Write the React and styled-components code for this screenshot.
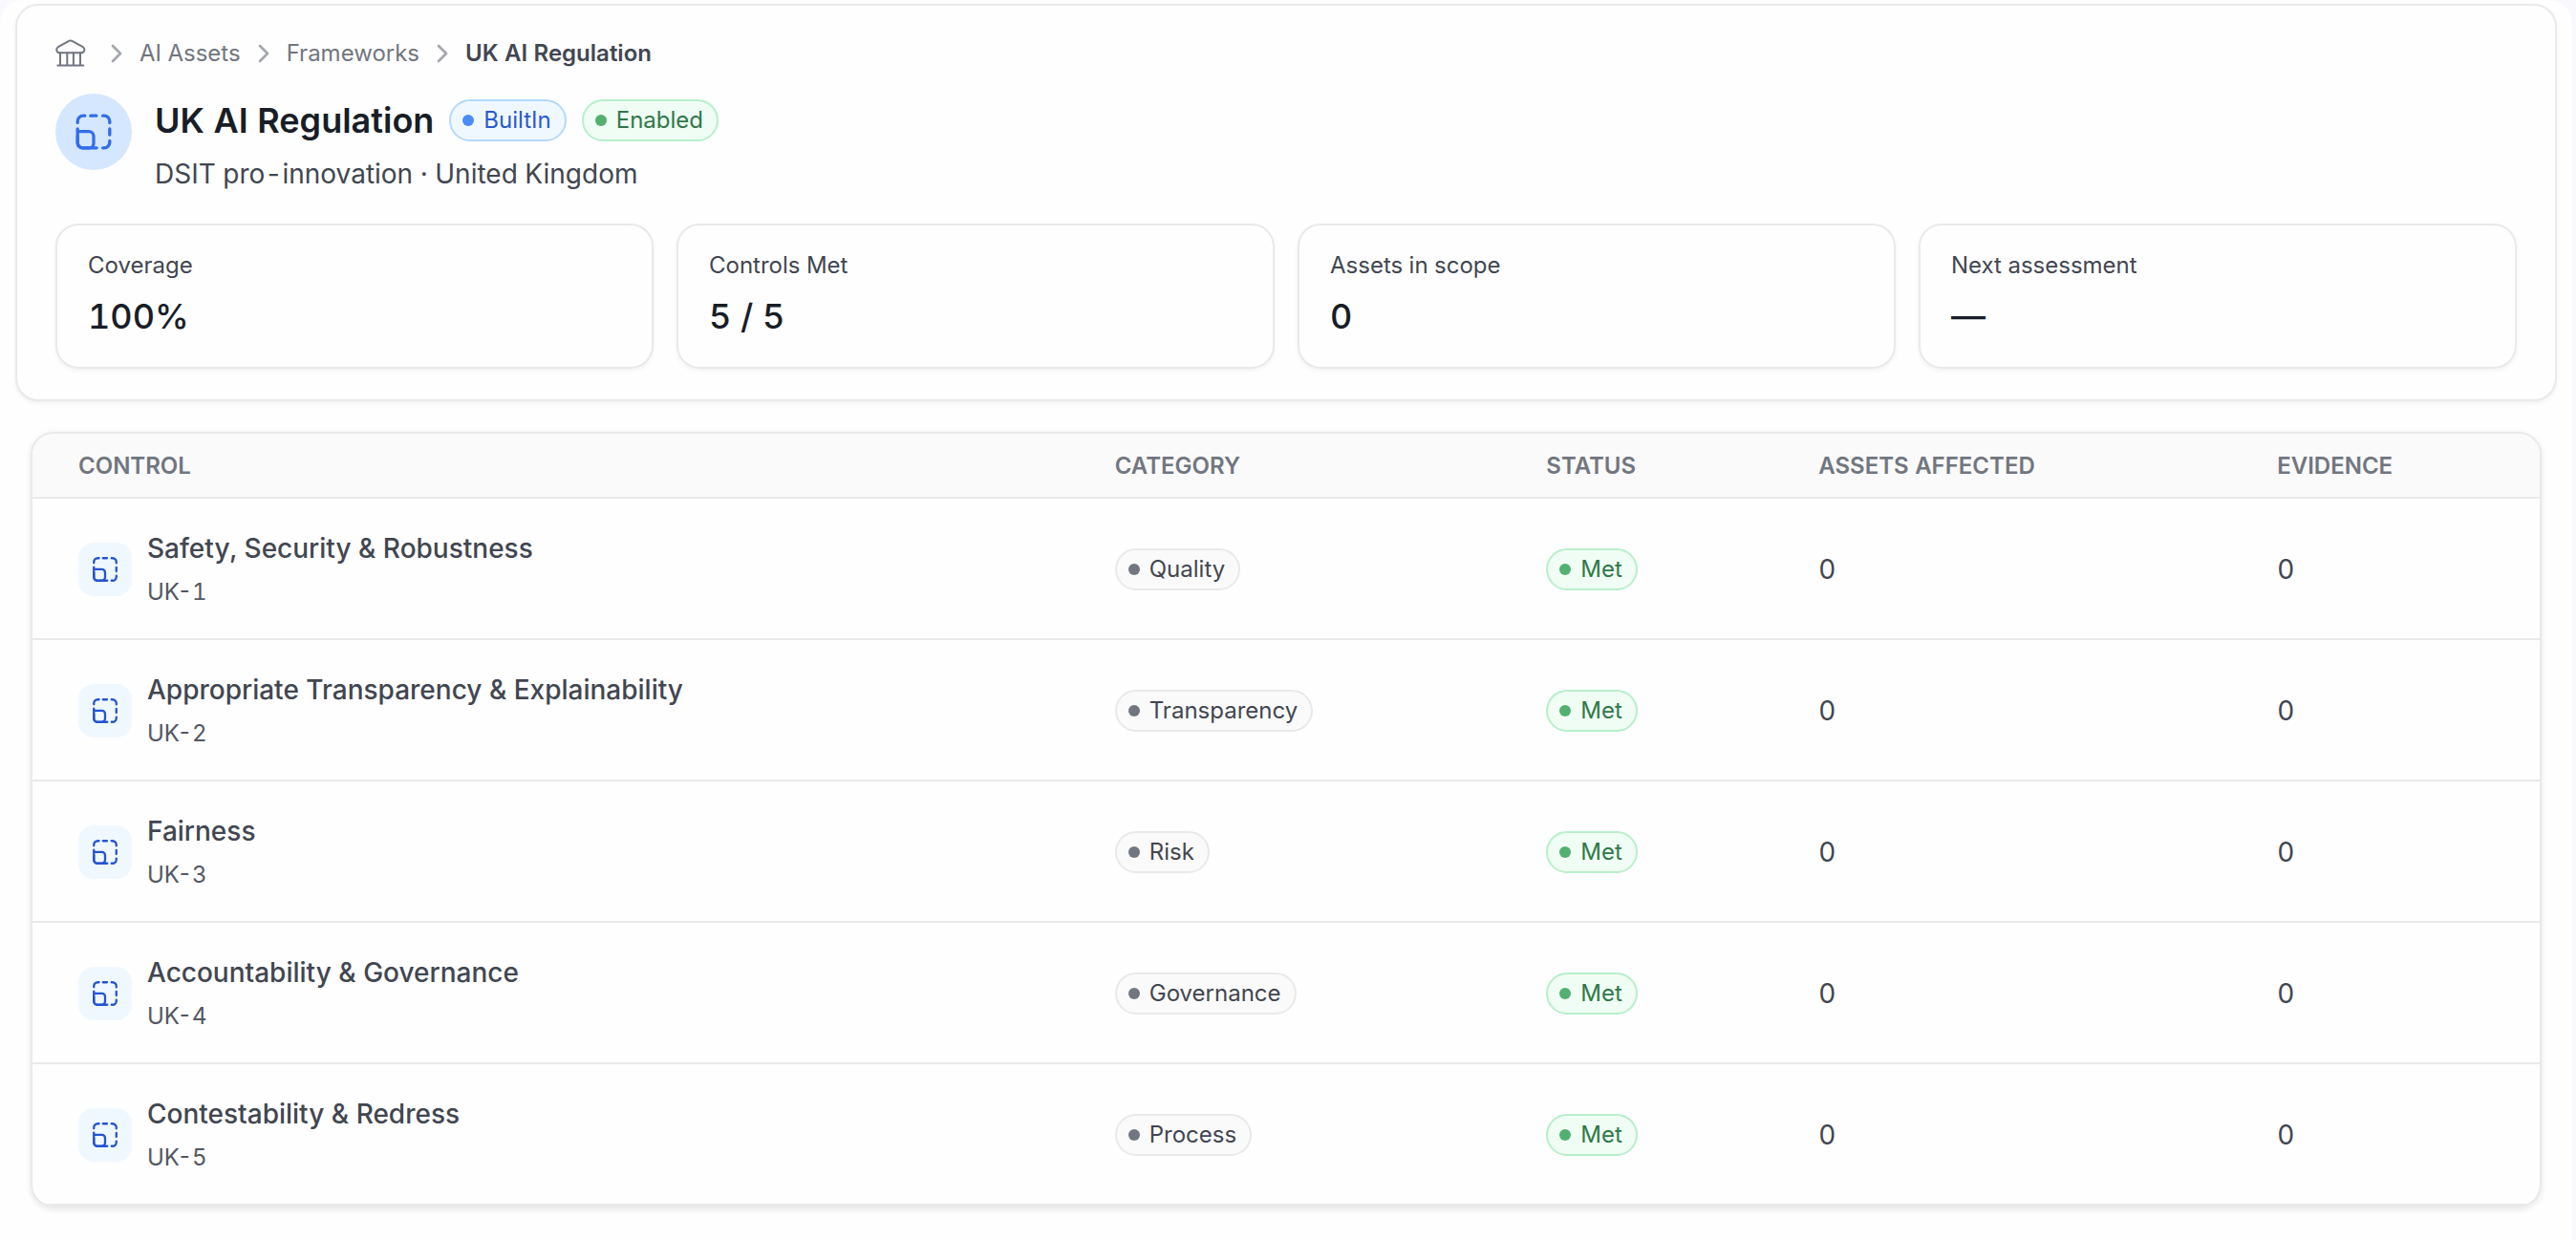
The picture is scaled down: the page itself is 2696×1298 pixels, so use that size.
import React from "react";
import styled, { createGlobalStyle } from "styled-components";

const controls = [
  { id: "UK-1", name: "Safety, Security & Robustness", category: "Quality" },
  {
    id: "UK-2",
    name: "Appropriate Transparency & Explainability",
    category: "Transparency",
  },
  { id: "UK-3", name: "Fairness", category: "Risk" },
  { id: "UK-4", name: "Accountability & Governance", category: "Governance" },
  { id: "UK-5", name: "Contestability & Redress", category: "Process" },
];

const stats = [
  { label: "Coverage", value: "100%" },
  { label: "Controls Met", value: "5 / 5" },
  { label: "Assets in scope", value: "0" },
  { label: "Next assessment", value: "—" },
];

const columns = ["Control", "Category", "Status", "Assets affected", "Evidence"];

const tones = {
  blue: { text: "#2a5ad0", bg: "#f0f8ff", border: "#b5d9fd", dot: "#4a8df6" },
  green: { text: "#2f7848", bg: "#effdf4", border: "#b8efcb", dot: "#53b070" },
  gray: { text: "#414651", bg: "#fafafa", border: "#e9e9ea", dot: "#717680" },
};

const BankIcon = () => (
  <svg
    width="32"
    height="32"
    viewBox="0 0 32 32"
    fill="none"
    stroke="currentColor"
    strokeWidth="2"
    strokeLinecap="round"
    strokeLinejoin="round"
    aria-hidden="true"
  >
    <path d="M14.2 2.9a3.2 3.2 0 0 1 3.2 0l11.4 6.3c2.6 1.8 1.6 6.1-1.6 6.1H4.4c-3.2 0-4.2-4.3-1.6-6.1z" />
    <path d="M5 15.3v13M12.3 15.3v13M18.9 15.3v13M26 15.3v13M2.3 28.4h27" />
  </svg>
);

const ChevronIcon = () => (
  <svg
    width="32"
    height="32"
    viewBox="0 0 24 24"
    fill="none"
    stroke="#a4a7ae"
    strokeWidth="2"
    strokeLinecap="round"
    strokeLinejoin="round"
    aria-hidden="true"
  >
    <path d="m9 18 6-6-6-6" />
  </svg>
);

const ScaleIcon = ({ size }) => (
  <svg
    width={size}
    height={size}
    viewBox="0 0 40 40"
    fill="none"
    stroke="currentColor"
    strokeWidth="3.3"
    strokeLinecap="round"
    strokeLinejoin="round"
    aria-hidden="true"
  >
    <path d="M3.2 10.4V9a5.8 5.8 0 0 1 5.8-5.8h1.8M16.8 3.2h6M29.6 3.2H31A5.8 5.8 0 0 1 36.8 9v1.6M36.8 17v6M36.8 29.4V31a5.8 5.8 0 0 1-5.8 5.8h-1.4" />
    <path d="M3.2 16.8V31A5.8 5.8 0 0 0 9 36.8h14.2" />
    <path d="M3.4 19.7H15a5 5 0 0 1 5 5v7.2a5 5 0 0 1-5 5H8.2a5 5 0 0 1-5-5v-7.2" />
  </svg>
);

const Badge = ({ tone, children }) => (
  <Pill $tone={tones[tone]}>
    <Dot $tone={tones[tone]} />
    {children}
  </Pill>
);

const Breadcrumbs = () => (
  <Crumbs aria-label="Breadcrumb">
    <HomeLink href="#home" aria-label="Home">
      <BankIcon />
    </HomeLink>
    <ChevronIcon />
    <CrumbLink href="#assets">AI Assets</CrumbLink>
    <ChevronIcon />
    <CrumbLink href="#frameworks">Frameworks</CrumbLink>
    <ChevronIcon />
    <CurrentCrumb aria-current="page">UK AI Regulation</CurrentCrumb>
  </Crumbs>
);

const ControlsTable = () => (
  <TableCard>
    <Table>
      <thead>
        <tr>
          {columns.map((column) => (
            <HeadCell key={column} scope="col">
              {column}
            </HeadCell>
          ))}
        </tr>
      </thead>
      <tbody>
        {controls.map((control) => (
          <tr key={control.id}>
            <Cell>
              <ControlInfo>
                <IconTile>
                  <ScaleIcon size={28} />
                </IconTile>
                <ControlText>
                  <ControlName>{control.name}</ControlName>
                  <ControlId>{control.id}</ControlId>
                </ControlText>
              </ControlInfo>
            </Cell>
            <Cell>
              <Badge tone="gray">{control.category}</Badge>
            </Cell>
            <Cell>
              <Badge tone="green">Met</Badge>
            </Cell>
            <Cell>0</Cell>
            <Cell>0</Cell>
          </tr>
        ))}
      </tbody>
    </Table>
  </TableCard>
);

const App = () => {
  return (
    <>
      <GlobalStyle />
      <Page>
        <HeaderCard>
          <Breadcrumbs />
          <Intro>
            <Avatar>
              <ScaleIcon size={40} />
            </Avatar>
            <div>
              <TitleRow>
                <Title>UK AI Regulation</Title>
                <Badge tone="blue">BuiltIn</Badge>
                <Badge tone="green">Enabled</Badge>
              </TitleRow>
              <Subtitle>DSIT pro-innovation · United Kingdom</Subtitle>
            </div>
          </Intro>
          <Stats>
            {stats.map((stat) => (
              <StatCard key={stat.label}>
                <StatLabel>{stat.label}</StatLabel>
                <StatValue>{stat.value}</StatValue>
              </StatCard>
            ))}
          </Stats>
        </HeaderCard>
        <ControlsTable />
      </Page>
    </>
  );
};

const GlobalStyle = createGlobalStyle`
  * {
    box-sizing: border-box;
  }

  body {
    margin: 0;
    background: #f8f8fd;
    color: #414651;
    font-family: Inter, "Liberation Sans", sans-serif;
    font-size: 24px;
    line-height: 36px;
    font-variant-numeric: tabular-nums;
    -webkit-font-smoothing: antialiased;
  }

  svg {
    display: block;
    flex-shrink: 0;
  }
`;

const Page = styled.main`
  min-height: 100vh;
  margin-right: 4px;
  padding: 4px 16px 32px 16px;
  background: #fefefe;
  border-radius: 24px 24px 0 0;
`;

const HeaderCard = styled.section`
  padding: 32px 40px;
  background: #fefefe;
  border: 2px solid #e9e9ea;
  border-radius: 24px;
  box-shadow: 0 2px 4px rgba(10, 13, 18, 0.06);
`;

const Crumbs = styled.nav`
  display: flex;
  align-items: center;
  gap: 8px;
`;

const HomeLink = styled.a`
  padding-right: 8px;
  color: #717680;
`;

const CrumbLink = styled.a`
  color: #717680;
  text-decoration: none;
`;

const CurrentCrumb = styled.span`
  color: #414651;
  font-weight: 600;
`;

const Intro = styled.div`
  display: flex;
  gap: 24px;
  margin-top: 24px;
`;

const Avatar = styled.div`
  display: flex;
  align-items: center;
  justify-content: center;
  width: 80px;
  height: 80px;
  border-radius: 50%;
  background: #d5e7fe;
  color: #316ee9;
`;

const TitleRow = styled.div`
  display: flex;
  align-items: center;
  gap: 16px;
  min-height: 56px;
`;

const Title = styled.h1`
  margin: 0;
  color: #181d27;
  font-size: 36px;
  line-height: 54px;
  font-weight: 600;
`;

const Subtitle = styled.p`
  margin: 8px 0 0;
  font-size: 28px;
  line-height: 40px;
`;

const Pill = styled.span`
  display: inline-flex;
  align-items: center;
  gap: 10px;
  height: 44px;
  padding: 0 14px 0 12px;
  border: 2px solid ${({ $tone }) => $tone.border};
  border-radius: 22px;
  background: ${({ $tone }) => $tone.bg};
  color: ${({ $tone }) => $tone.text};
  font-size: 24px;
  white-space: nowrap;
  vertical-align: middle;
`;

const Dot = styled.span`
  width: 12px;
  height: 12px;
  border-radius: 50%;
  background: ${({ $tone }) => $tone.dot};
`;

const Stats = styled.div`
  display: grid;
  grid-template-columns: repeat(4, 1fr);
  gap: 24px;
  margin-top: 32px;
`;

const StatCard = styled.div`
  padding: 24px 32px 26px;
  border: 2px solid #e9e9ea;
  border-radius: 24px;
  box-shadow: 0 2px 4px rgba(10, 13, 18, 0.05);
`;

const StatLabel = styled.div`
  color: #414651;
`;

const StatValue = styled.div`
  margin-top: 8px;
  color: #181d27;
  font-size: 36px;
  line-height: 54px;
  font-weight: 500;
`;

const TableCard = styled.section`
  margin: 32px 16px 0;
  overflow: hidden;
  border: 2px solid #e9e9ea;
  border-radius: 24px;
  box-shadow: 0 2px 6px rgba(10, 13, 18, 0.1);
`;

const Table = styled.table`
  width: 100%;
  border-collapse: separate;
  border-spacing: 0;
`;

// row lines are inset shadows so they don't add to the row height
const HeadCell = styled.th`
  padding: 16px 48px;
  box-shadow: inset 0 -2px 0 #e9e9ea;
  background: #fafafa;
  color: #717680;
  font-weight: 600;
  text-align: left;
  text-transform: uppercase;
  white-space: nowrap;
`;

const Cell = styled.td`
  padding: 32px 48px;
  box-shadow: inset 0 -2px 0 #e9e9ea;
  font-size: 28px;
`;

const ControlInfo = styled.div`
  display: flex;
  align-items: center;
  gap: 16px;
`;

const IconTile = styled.div`
  display: flex;
  align-items: center;
  justify-content: center;
  width: 56px;
  height: 56px;
  border-radius: 16px;
  background: #f0f8ff;
  color: #2454d0;
`;

const ControlText = styled.div`
  display: flex;
  flex-direction: column;
  gap: 8px;
  white-space: nowrap;
`;

const ControlName = styled.span`
  color: #414651;
  font-size: 28px;
  line-height: 40px;
  font-weight: 500;
`;

const ControlId = styled.span`
  color: #535862;
  font-size: 24px;
  line-height: 36px;
`;

export default App;
